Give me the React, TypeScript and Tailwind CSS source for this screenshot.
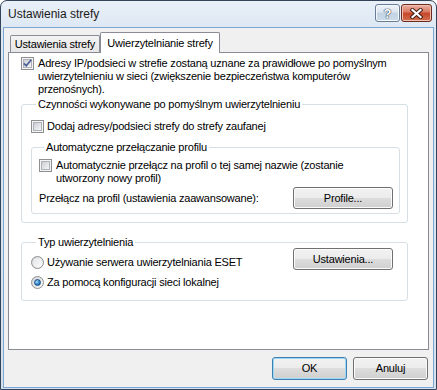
import React from "react";

function Checkbox({ checked = false }: { checked?: boolean }) {
  return (
    <div className="flex h-[13px] w-[13px] shrink-0 items-center justify-center border border-[#8f8f8f] bg-[#f4f4f4]">
      <div className="flex h-[9px] w-[9px] items-center justify-center border border-[#aeb3b9] bg-[linear-gradient(135deg,#c9cdd3,#f6f6f6)]">
        {checked && (
          <svg width="9" height="9" viewBox="0 0 9 9" className="overflow-visible">
            <path d="M0.8 4.3 L3.3 6.8 L8.2 0.8" fill="none" stroke="#4a5f97" strokeWidth="1.7" />
          </svg>
        )}
      </div>
    </div>
  );
}

function Radio({ checked = false }: { checked?: boolean }) {
  return (
    <div className="flex h-[13px] w-[13px] shrink-0 items-center justify-center rounded-full border border-[#8f8f8f] bg-[linear-gradient(135deg,#d3d6da,#f8f8f8)]">
      {checked ? (
        <div className="h-[7px] w-[7px] rounded-full border border-[#1d4f86] bg-[radial-gradient(circle_at_35%_35%,#a8dcf8,#2a7fc8_60%,#0e4f92)]" />
      ) : (
        <div className="h-[9px] w-[9px] rounded-full bg-[linear-gradient(135deg,#e3e5e8,#fbfbfb)]" />
      )}
    </div>
  );
}

function WinButton({ children, className = "", primary = false }: { children: React.ReactNode; className?: string; primary?: boolean }) {
  return (
    <div
      className={`flex shrink-0 items-center justify-center rounded-[3px] border ${
        primary ? "border-[#3c7fb1] shadow-[inset_0_0_0_1px_#9fd8f6]" : "border-[#707070] shadow-[inset_0_0_0_1px_#fbfbfb]"
      } bg-[linear-gradient(#f2f2f2_0%,#ebebeb_50%,#dddddd_50%,#cfcfcf_100%)] ${className}`}
    >
      {children}
    </div>
  );
}

function Group({ label, className = "", children }: { label: string; className?: string; children: React.ReactNode }) {
  return (
    <div className={`rounded-[3px] border border-[#d5dfe5] ${className}`}>
      <div className="-mt-[7px] ml-[5px] w-fit bg-white px-[2px] leading-[13px]">{label}</div>
      {children}
    </div>
  );
}

export default function App() {
  return (
    <div className="h-[390px] w-[437px] bg-white font-['Liberation_Sans',Arial,sans-serif] text-[11px] text-black">
      <div className="flex h-[390px] w-[437px] flex-col rounded-t-[7px] border border-[#33445a] bg-[linear-gradient(#e9f0f8,#dce7f3_30px,#d4e0ee)] px-[2px] pb-[1px]">
        {/* Title bar */}
        <div className="-mx-[2px] flex h-[26px] items-start justify-between pl-[7px] pr-[4px]">
          <div className="pt-[6px] text-[12px] leading-[14px] text-[#1b1b1b]">Ustawienia strefy</div>
          <div className="flex gap-[1px] pt-[3px]">
            <div className="flex h-[18px] w-[25px] items-center justify-center rounded-[3px] border border-[#6b7d95] bg-[linear-gradient(#eef3f9_0%,#dbe5f0_45%,#c3d3e4_50%,#cddbea_100%)] shadow-[inset_0_0_0_1px_#f5f8fc]">
              <span className="text-[13px] font-bold leading-[13px] text-white [text-shadow:0_0_1px_#3b4656,0_0_1px_#3b4656,0_0_1px_#3b4656]">?</span>
            </div>
            <div className="flex h-[18px] w-[31px] items-center justify-center rounded-[3px] border border-[#6e2a1d] bg-[linear-gradient(#eab0a4_0%,#d9775f_45%,#c6442a_50%,#d0714d_100%)] shadow-[inset_0_0_0_1px_#f1c1b4]">
              <svg width="13" height="11" viewBox="0 0 13 11">
                <path d="M2.5 2 L10.5 9 M10.5 2 L2.5 9" stroke="#3c1a14" strokeWidth="4" strokeLinecap="square" />
                <path d="M2.5 2 L10.5 9 M10.5 2 L2.5 9" stroke="#ffffff" strokeWidth="2.2" strokeLinecap="square" />
              </svg>
            </div>
          </div>
        </div>
        {/* Client area */}
        <div className="flex flex-1 flex-col border border-[#7aa7d4] bg-[#f0f0f0] px-[4px] pt-[4px] tracking-[-0.2px]">
          {/* Tabs */}
          <div className="flex h-[20px] items-end pl-[2px]">
            <div className="flex h-[17px] w-[90px] items-center justify-center rounded-t-[2px] border border-b-0 border-[#898c95] bg-[linear-gradient(#f3f3f3,#e6e6e6)] leading-[13px]">
              Ustawienia strefy
            </div>
            <div className="relative z-10 -mb-[1px] flex h-[21px] w-[120px] items-center justify-center rounded-t-[2px] border border-b-0 border-[#898c95] bg-white leading-[13px]">
              Uwierzytelnianie strefy
            </div>
          </div>
          {/* Panel */}
          <div className="flex h-[298px] flex-col border border-[#898c95] bg-white pl-[12px] pt-[4px]">
            <div className="flex items-start">
              <Checkbox checked />
              <div className="ml-[4px] leading-[13px]">
                Adresy IP/podsieci w strefie zostaną uznane za prawidłowe po pomyślnym
                <br />
                uwierzytelnieniu w sieci (zwiększenie bezpieczeństwa komputerów
                <br />
                przenośnych).
              </div>
            </div>
            <Group label="Czynności wykonywane po pomyślnym uwierzytelnieniu" className="mt-[8px] w-[387px] pb-[8px] pl-[9px]">
              <div className="mt-[9px] flex items-center leading-[13px]">
                <Checkbox />
                <span className="ml-[3px]">Dodaj adresy/podsieci strefy do strefy zaufanej</span>
              </div>
              <Group label="Automatyczne przełączanie profilu" className="mt-[14px] w-[369px] pb-[4px] pl-[7px] pr-[6px]">
                <div className="mt-[5px] flex items-start">
                  <Checkbox />
                  <div className="ml-[4px] leading-[13px]">
                    Automatycznie przełącz na profil o tej samej nazwie (zostanie
                    <br />
                    utworzony nowy profil)
                  </div>
                </div>
                <div className="mt-[2px] flex items-center justify-between">
                  <span className="leading-[13px]">Przełącz na profil (ustawienia zaawansowane):</span>
                  <WinButton className="h-[22px] w-[100px]">Profile...</WinButton>
                </div>
              </Group>
            </Group>
            <Group label="Typ uwierzytelnienia" className="mt-[19px] w-[387px] pb-[11px] pl-[9px] pr-[14px]">
              <div className="-mt-[1px] flex items-end justify-between">
                <div className="mb-[1px] flex items-center leading-[13px]">
                  <Radio />
                  <span className="ml-[3px]">Używanie serwera uwierzytelniania ESET</span>
                </div>
                <WinButton className="h-[22px] w-[100px]">Ustawienia...</WinButton>
              </div>
              <div className="mt-[6px] flex items-center leading-[13px]">
                <Radio checked />
                <span className="ml-[3px]">Za pomocą konfiguracji sieci lokalnej</span>
              </div>
            </Group>
          </div>
          {/* Buttons */}
          <div className="mt-[7px] flex justify-end gap-[6px] pr-[1px]">
            <WinButton primary className="h-[23px] w-[75px]">OK</WinButton>
            <WinButton className="h-[23px] w-[75px]">Anuluj</WinButton>
          </div>
        </div>
      </div>
    </div>
  );
}
